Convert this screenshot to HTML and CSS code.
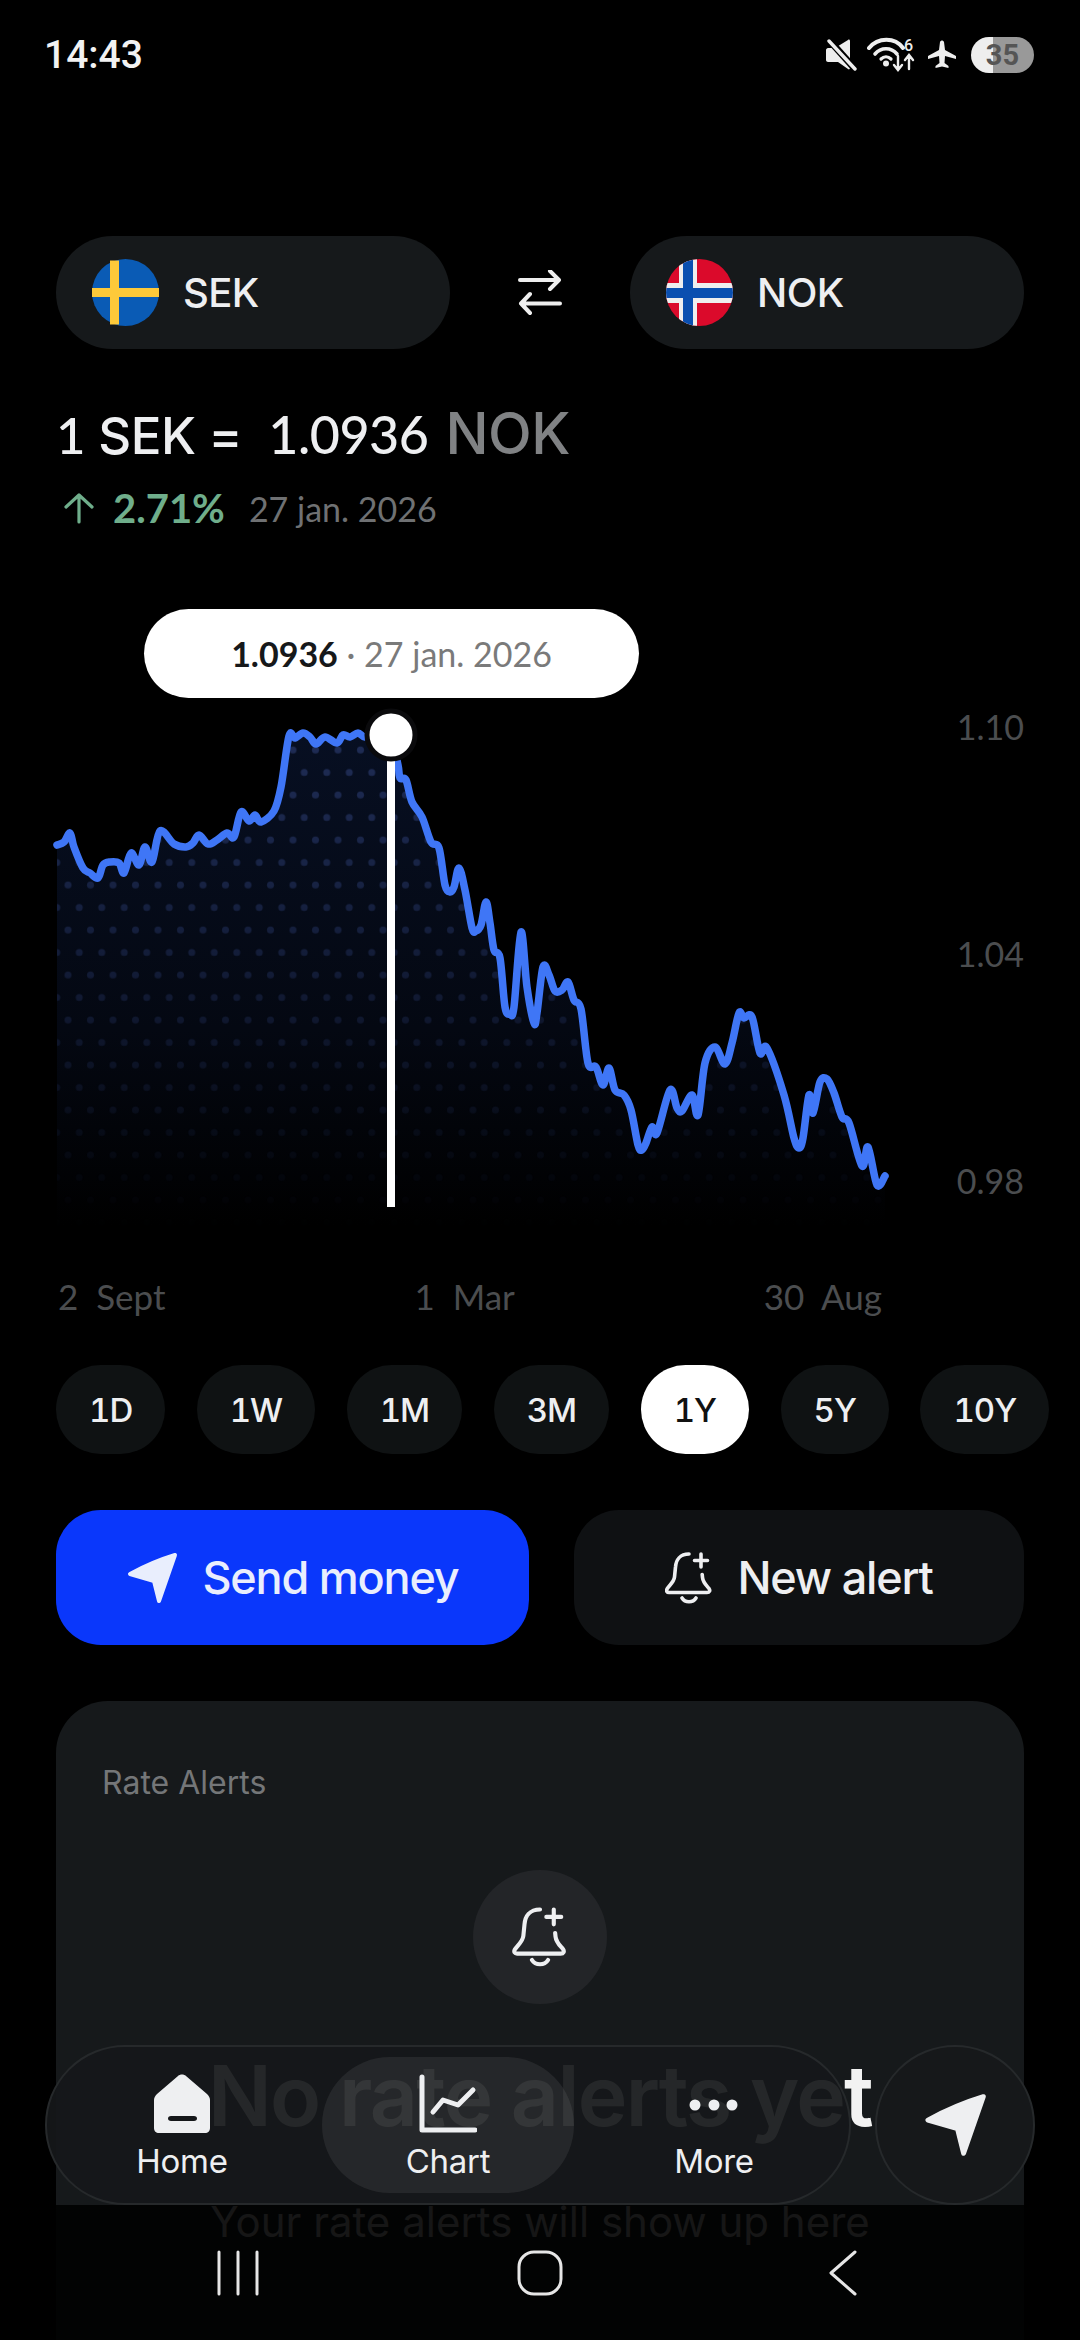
FILE: index.html
```html
<!DOCTYPE html>
<html>
<head>
  <meta charset="utf-8">
  <title>SEK to NOK</title>
  <link rel="stylesheet" href="styles.css">
</head>
<body>
  <div class="screen">
    <header class="statusbar">
      <span class="clock">14:43</span>
      <div class="status-icons">
        <svg class="ic-mute" width="32" height="32" viewBox="0 0 32 32">
          <path d="M1 11c0-1 1-2 2-2h7L23 1c1-1 2 0 2 1v27c0 1-1 2-2 1l-10-7H3c-1 0-2-1-2-2z" fill="#eee"/>
          <path d="M4 1l27 30" stroke="#000" stroke-width="7"/>
          <path d="M4 2l26 28" stroke="#eee" stroke-width="3.400" stroke-linecap="round"/>
        </svg>
        <svg class="ic-wifi" width="50" height="36" viewBox="0 0 50 36" fill="none" stroke="#eee" stroke-linecap="round">
          <path d="M2 11C11 0 28 0 36 11" stroke-width="4"/>
          <path d="M8 17c6-7 16-7 22 0" stroke-width="3.600"/>
          <path d="M14 22c3-3 7-3 10 0" stroke-width="3.200"/>
          <circle cx="19" cy="26.500" r="3" fill="#eee" stroke="none"/>
          <path d="M31 19v13M27 28l4 5 4-5M42 32V19M38 23l4-5 4 5" stroke-width="2.400"/>
          <text x="37" y="14" class="wifi-six">6</text>
        </svg>
        <svg class="ic-plane" width="30" height="30" viewBox="0 0 30 30">
          <path d="M13 2c1-2 3-2 4 0l1 8 11 6v3l-11-3-.5 7 4 3v2l-6.500-1.500L8.500 28v-2l4-3-.5-7-11 3v-3l11-6z" fill="#eee"/>
        </svg>
        <span class="battery">35</span>
      </div>
    </header>

    <section class="pair">
      <button class="currency">
        <svg class="flag" viewBox="0 0 67 67">
          <circle cx="33.500" cy="33.500" r="33.500" fill="#0a5bb5"/>
          <path d="M18 1.500h9v64h-9zM0 29h67v9H0z" fill="#fdc93a"/>
        </svg>
        <span>SEK</span>
      </button>
      <svg class="swap" width="46" height="46" viewBox="0 0 46 46" fill="none" stroke="#eee" stroke-width="4" stroke-linecap="round" stroke-linejoin="round">
        <path d="M3 10h39M33 1l9 9-9 9M43 33.500H4M13 24l-9 9.500 9 9.500"/>
      </svg>
      <button class="currency">
        <svg class="flag" viewBox="0 0 67 67">
          <clipPath id="flagClip"><circle cx="33.500" cy="33.500" r="33.500"/></clipPath>
          <g clip-path="url(#flagClip)">
            <rect width="67" height="67" fill="#db0a2b"/>
            <path d="M13 0h18v67H13zM0 24h67v20H0z" fill="#eee"/>
            <path d="M17 0h10v67H17zM0 29h67v10H0z" fill="#0a4fb0"/>
          </g>
        </svg>
        <span>NOK</span>
      </button>
    </section>

    <section class="rate">
      <h1 class="rate-line"><span class="num">1</span> SEK = &nbsp;<span class="num rate-value">1.0936</span> <span class="rate-code">NOK</span></h1>
      <div class="rate-change">
        <svg width="32" height="32" viewBox="0 0 32 32" fill="none" stroke="#6fae8b" stroke-width="3.200" stroke-linecap="round" stroke-linejoin="round">
          <path d="M16 30V3M3 15L16 3l13 12"/>
        </svg>
        <span class="pct">2.71%</span>
        <span class="rate-date">27 jan. 2026</span>
      </div>
    </section>

    <section class="chart">
      <svg class="plot" viewBox="0 590 1080 660" width="1080" height="660">
        <defs>
          <linearGradient id="areaFill" gradientUnits="userSpaceOnUse" x1="0" y1="735" x2="0" y2="1225">
            <stop offset="0" stop-color="#070f22"/>
            <stop offset="0.6" stop-color="#040812"/>
            <stop offset="1" stop-color="#000"/>
          </linearGradient>
          <linearGradient id="fadeFill" gradientUnits="userSpaceOnUse" x1="0" y1="735" x2="0" y2="1230">
            <stop offset="0" stop-color="#fff"/>
            <stop offset="1" stop-color="#000"/>
          </linearGradient>
          <pattern id="dots" patternUnits="userSpaceOnUse" x="56.750" y="738.750" width="22.500" height="45">
            <circle cx="11.250" cy="11.250" r="3.500" fill="#1f2c55"/>
            <circle cx="0" cy="33.750" r="3.500" fill="#1f2c55"/>
            <circle cx="22.500" cy="33.750" r="3.500" fill="#1f2c55"/>
          </pattern>
          <mask id="fade" maskUnits="userSpaceOnUse" x="0" y="590" width="1080" height="660">
            <rect x="0" y="590" width="1080" height="660" fill="url(#fadeFill)"/>
          </mask>
        </defs>
        <path id="area" fill="url(#areaFill)"/>
        <path id="areaDots" fill="url(#dots)" mask="url(#fade)"/>
        <path id="line" fill="none" stroke="#3f76f6" stroke-width="7.500" stroke-linecap="round" stroke-linejoin="round"/>
        <rect x="387" y="735" width="8" height="472" fill="#fff"/>
        <circle cx="391" cy="735" r="24" fill="#fff" stroke="#0a0a0c" stroke-width="5"/>
      </svg>
      <div class="tooltip"><b>1.0936</b> · 27 jan. 2026</div>
      <div class="y-axis">
        <span>1.10</span>
        <span>1.04</span>
        <span>0.98</span>
      </div>
    </section>

    <div class="x-axis">
      <span>2&nbsp; Sept</span>
      <span>1&nbsp; Mar</span>
      <span>30&nbsp; Aug</span>
    </div>

    <div class="ranges">
      <button class="range">1D</button>
      <button class="range">1W</button>
      <button class="range">1M</button>
      <button class="range">3M</button>
      <button class="range active">1Y</button>
      <button class="range">5Y</button>
      <button class="range">10Y</button>
    </div>

    <div class="actions">
      <button class="action send">
        <svg width="52" height="52" viewBox="0 0 52 52"><path class="plane" d="M49 3Q26 10 4 22L28 29 33 49Q41 26 49 3z"/></svg>
        Send money
      </button>
      <button class="action alert">
        <svg width="48" height="54" viewBox="0 0 48 54" class="bell"><path d="M24 3C15 3 11 9 10.500 16l-1 10c-.5 5-5 8-7.500 12-1 2 0 3.500 2 3.500h38c2.500 0 3.500-2 2-4-3-3.500-6-6-6.500-11l-.3-3M36 3v13M29.500 9.500h13M17 47c3 5 11 5 14 0"/></svg>
        New alert
      </button>
    </div>

    <section class="card">
      <h2 class="card-title">Rate Alerts</h2>
      <div class="bell-wrap">
        <svg width="56" height="62" viewBox="0 0 48 54" class="bell"><path d="M24 3C15 3 11 9 10.500 16l-1 10c-.5 5-5 8-7.500 12-1 2 0 3.500 2 3.500h38c2.500 0 3.500-2 2-4-3-3.500-6-6-6.500-11l-.3-3M36 3v13M29.500 9.500h13M17 47c3 5 11 5 14 0"/></svg>
      </div>
      <h3 class="empty-head">No rate alerts yet</h3>
      <p class="empty-sub">Your rate alerts will show up here</p>
    </section>

    <nav class="tabbar">
      <div class="tabs">
        <a class="tab">
          <svg width="58" height="60" viewBox="0 0 58 60">
            <path fill-rule="evenodd" fill="#eeeff1" d="M25 2c2-2 6-2 8 0l21 18c2 2 3 4 3 6v28c0 3-2 5-5 5H6c-3 0-5-2-5-5V26c0-2 1-4 3-6zM18 42c-2 0-3 1-3 2.500S16 47 18 47h23c2 0 3-1 3-2.500S43 42 41 42z"/>
          </svg>
          <span>Home</span>
        </a>
        <a class="tab current">
          <svg width="58" height="60" viewBox="0 0 58 60" fill="none" stroke="#eeeff1" stroke-linecap="round" stroke-linejoin="round">
            <path d="M3 3v53h53" stroke-width="5"/>
            <path d="M14 38l10-12 15 5 15-15" stroke-width="5"/>
          </svg>
          <span>Chart</span>
        </a>
        <a class="tab">
          <svg width="58" height="60" viewBox="0 0 58 60" fill="#eeeff1">
            <circle cx="10" cy="31" r="5.500"/><circle cx="29" cy="31" r="5.500"/><circle cx="47" cy="31" r="5.500"/>
          </svg>
          <span>More</span>
        </a>
      </div>
      <button class="tab-send">
        <svg width="64" height="64" viewBox="0 0 52 52"><path class="plane" d="M49 3Q26 10 4 22L28 29 33 49Q41 26 49 3z"/></svg>
      </button>
    </nav>

    <footer class="sysnav">
      <svg class="sys-recent" width="42" height="46" viewBox="0 0 42 46" stroke="#e6e6e6" stroke-width="3" stroke-linecap="round"><path d="M2 2v42M21 2v42M40 2v42"/></svg>
      <svg class="sys-home" width="46" height="46" viewBox="0 0 46 46" fill="none" stroke="#e6e6e6" stroke-width="3"><rect x="2" y="2" width="42" height="42" rx="15"/></svg>
      <svg width="30" height="46" viewBox="0 0 30 46" fill="none" stroke="#e6e6e6" stroke-width="3" stroke-linecap="round" stroke-linejoin="round"><path d="M27 2L3 23l24 21"/></svg>
    </footer>
  </div>
  <script src="chart.js"></script>
</body>
</html>
```

FILE: styles.css
```css
* {
  box-sizing: border-box;
}
html, body {
  margin: 0;
  height: 100%;
  background: #000;
}
body {
  font-family: Inter, "Noto Sans", sans-serif;
  color: #eeeff1;
}
button {
  font: inherit;
  color: inherit;
  border: 0;
  padding: 0;
  background: none;
}
h1, h2, h3, p {
  margin: 0;
  font-weight: inherit;
}
.screen {
  position: relative;
  width: 1080px;
  height: 2340px;
  overflow: hidden;
}
.num {
  font-family: Lato, sans-serif;
}

/* status bar */
.statusbar {
  height: 110px;
  padding: 0 46px 0 44px;
  display: flex;
  justify-content: space-between;
  align-items: center;
}
.clock {
  font: 500 39px Roboto, sans-serif;
  color: #f2f2f2;
}
.status-icons {
  display: flex;
  align-items: center;
}
.ic-mute { margin-right: 10px; }
.ic-wifi { margin-right: 10px; }
.ic-plane { margin-right: 14px; }
.wifi-six {
  font: 500 16px Roboto, sans-serif;
  fill: #eee;
  stroke: none;
}
.battery {
  width: 63px;
  height: 36px;
  border-radius: 18px;
  background: linear-gradient(90deg, #eee 22px, #999 22px);
  color: #555;
  font: 700 29px/36px Roboto, sans-serif;
  text-align: center;
}

/* currency picker */
.pair {
  margin-top: 126px;
  padding: 0 56px;
  display: flex;
  justify-content: space-between;
  align-items: center;
}
.currency {
  width: 394px;
  height: 113px;
  padding-left: 36px;
  border-radius: 57px;
  background: #16191b;
  display: flex;
  align-items: center;
  gap: 24px;
  font-size: 40px;
  font-weight: 500;
  letter-spacing: -0.6px;
}
.flag {
  width: 67px;
  height: 67px;
}

/* rate headline */
.rate {
  padding: 0 56px;
}
.rate-line {
  margin-top: 49px;
  font-size: 51px;
  line-height: 72px;
  font-weight: 500;
  letter-spacing: -0.5px;
}
.rate-value {
  font-size: 52px;
}
.rate-code {
  margin-left: 4px;
  font-size: 57px;
  color: #808284;
}
.rate-change {
  margin-top: 12px;
  display: flex;
  align-items: center;
  font-family: Lato, sans-serif;
}
.rate-change svg {
  margin-left: 7px;
  margin-right: 18px;
}
.pct {
  font-size: 40px;
  font-weight: 700;
  color: #6fae8b;
  margin-right: 24px;
}
.rate-date {
  font-size: 34px;
  color: #6f7173;
}

/* chart */
.chart {
  position: relative;
  height: 660px;
  margin-top: 58px;
}
.plot {
  position: absolute;
  top: 0;
  left: 0;
}
.tooltip {
  position: absolute;
  left: 144px;
  top: 19px;
  width: 495px;
  height: 89px;
  border-radius: 45px;
  background: #fff;
  color: #7a7a7a;
  font: 400 34px/89px Lato, sans-serif;
  text-align: center;
}
.tooltip b {
  color: #16181a;
  font-weight: 700;
}
.y-axis {
  position: absolute;
  top: 114px;
  right: 56px;
  height: 500px;
  display: flex;
  flex-direction: column;
  justify-content: space-between;
  font: 400 34px/46px Lato, sans-serif;
  color: #4b4d4f;
}
.x-axis {
  margin-top: 23px;
  padding: 0 198px 0 58px;
  display: flex;
  justify-content: space-between;
  font: 400 35px/46px Lato, sans-serif;
  color: #4b4d4f;
}

/* range chips */
.ranges {
  margin-top: 46px;
  padding-left: 56px;
  display: flex;
  gap: 31.500px;
}
.range {
  height: 89px;
  padding: 0 33px;
  border-radius: 45px;
  background: #0f1213;
  font-size: 33px;
  font-weight: 500;
  letter-spacing: -1px;
  font-feature-settings: "tnum";
}
.range.active {
  background: #fff;
  color: #111;
}

/* actions */
.actions {
  margin-top: 56px;
  padding: 0 56px;
  display: flex;
  gap: 45px;
}
.action {
  height: 135px;
  border-radius: 45px;
  display: flex;
  align-items: center;
  justify-content: center;
  gap: 24px;
  font-size: 45px;
  font-weight: 500;
  letter-spacing: -1.200px;
}
.send {
  width: 473px;
  background: #0a37fb;
  color: #e9eefd;
}
.alert {
  width: 450px;
  background: #0f1113;
}
.plane {
  fill: currentColor;
  stroke: currentColor;
  stroke-width: 4;
  stroke-linejoin: round;
}
.bell {
  fill: none;
  stroke: #eeeff1;
  stroke-width: 3.600;
  stroke-linecap: round;
  stroke-linejoin: round;
}

/* rate alerts card */
.card {
  margin: 56px 56px 0;
  height: 800px;
  padding: 61px 46px 0;
  border-radius: 52px;
  background: #16191b;
}
.card-title {
  font-size: 32px;
  line-height: 42px;
  color: #747678;
}
.bell-wrap {
  width: 134px;
  height: 134px;
  margin: 66px auto 0;
  border-radius: 50%;
  background: #232528;
  display: flex;
  align-items: center;
  justify-content: center;
}
.empty-head {
  margin-top: 42px;
  font-size: 84px;
  line-height: 100px;
  font-weight: 600;
  letter-spacing: -1.700px;
  text-align: center;
  white-space: nowrap;
  color: #f2f2f2;
}
.empty-sub {
  margin-top: 48px;
  font-size: 42px;
  line-height: 56px;
  text-align: center;
  color: #b0b2b4;
}

/* floating tab bar */
.tabbar {
  position: absolute;
  left: 45px;
  top: 2045px;
  width: 990px;
  height: 160px;
  display: flex;
  justify-content: space-between;
}
.tabs {
  width: 806px;
  padding: 10px 9px;
  border: 2px solid #26292b;
  border-radius: 80px;
  background: rgba(22, 24, 26, 0.93);
  display: flex;
  gap: 14px;
}
.tab {
  width: 252px;
  border-radius: 70px;
  display: flex;
  flex-direction: column;
  align-items: center;
  padding-top: 17px;
  font-size: 33px;
  line-height: 54px;
  font-weight: 400;
  letter-spacing: -0.3px;
}
.tab.current {
  background: rgba(255, 255, 255, 0.07);
}
.tab-send {
  width: 160px;
  border: 2px solid #26292b;
  border-radius: 50%;
  background: #16181a;
  display: flex;
  align-items: center;
  justify-content: center;
}

/* system nav */
.sysnav {
  position: absolute;
  left: 0;
  right: 0;
  bottom: 0;
  height: 135px;
  padding: 45px 0 0 217px;
  background: rgba(0, 0, 0, 0.88);
  display: flex;
  align-items: flex-start;
}
.sys-recent {
  margin-right: 258px;
}
.sys-home {
  margin-right: 265px;
}
```

FILE: chart.js
```js
// traced rate history, in page pixels
const points = [
  [57,845],[64,842],[70,833],[74,847],[83,868],[90,873],[98,878],[103,865],[110,862],[119,863],
  [124,873],[131,853],[139,865],[145,847],[152,862],[160,831],[174,844],[186,847],[193,843],[199,835],
  [208,844],[217,840],[227,833],[234,837],[241,812],[249,821],[255,815],[261,822],[274,811],[281,787],
  [289,736],[295,738],[303,733],[310,737],[316,744],[325,737],[337,743],[343,735],[350,737],[358,733],
  [365,737],[380,735],[391,738],[398,765],[400,778],[406,780],[412,802],[422,817],[431,842],[439,848],
  [445,885],[450,892],[454,887],[459,868],[465,890],[472,928],[476,931],[481,925],[486,902],[490,923],
  [494,950],[500,958],[505,1007],[510,1014],[514,1007],[521,932],[527,987],[534,1023],[537,1013],[543,967],
  [549,975],[555,991],[562,990],[568,982],[574,1000],[581,1009],[588,1063],[596,1067],[603,1085],[609,1068],
  [615,1090],[624,1095],[631,1110],[638,1145],[642,1150],[646,1143],[652,1127],[657,1133],[670,1090],[677,1108],
  [682,1111],[692,1095],[698,1115],[705,1063],[715,1047],[725,1064],[732,1043],[739,1013],[744,1018],[752,1017],
  [760,1053],[767,1048],[784,1095],[794,1138],[799,1148],[803,1138],[809,1095],[813,1113],[820,1082],[827,1079],
  [834,1093],[842,1117],[849,1123],[862,1166],[868,1147],[877,1185],[885,1176]
];

// catmull-rom through the points so the line reads as a curve
function smooth(pts) {
  let d = `M${pts[0][0]} ${pts[0][1]}`;
  for (let i = 0; i < pts.length - 1; i++) {
    const p0 = pts[i - 1] || pts[i];
    const p1 = pts[i];
    const p2 = pts[i + 1];
    const p3 = pts[i + 2] || p2;
    const c1x = p1[0] + (p2[0] - p0[0]) / 6;
    const c1y = p1[1] + (p2[1] - p0[1]) / 6;
    const c2x = p2[0] - (p3[0] - p1[0]) / 6;
    const c2y = p2[1] - (p3[1] - p1[1]) / 6;
    d += `C${c1x} ${c1y} ${c2x} ${c2y} ${p2[0]} ${p2[1]}`;
  }
  return d;
}

const d = smooth(points);
const last = points[points.length - 1];
const closed = `${d}L${last[0]} 1235L${points[0][0]} 1235Z`;
document.getElementById('line').setAttribute('d', d);
document.getElementById('area').setAttribute('d', closed);
document.getElementById('areaDots').setAttribute('d', closed);
```
